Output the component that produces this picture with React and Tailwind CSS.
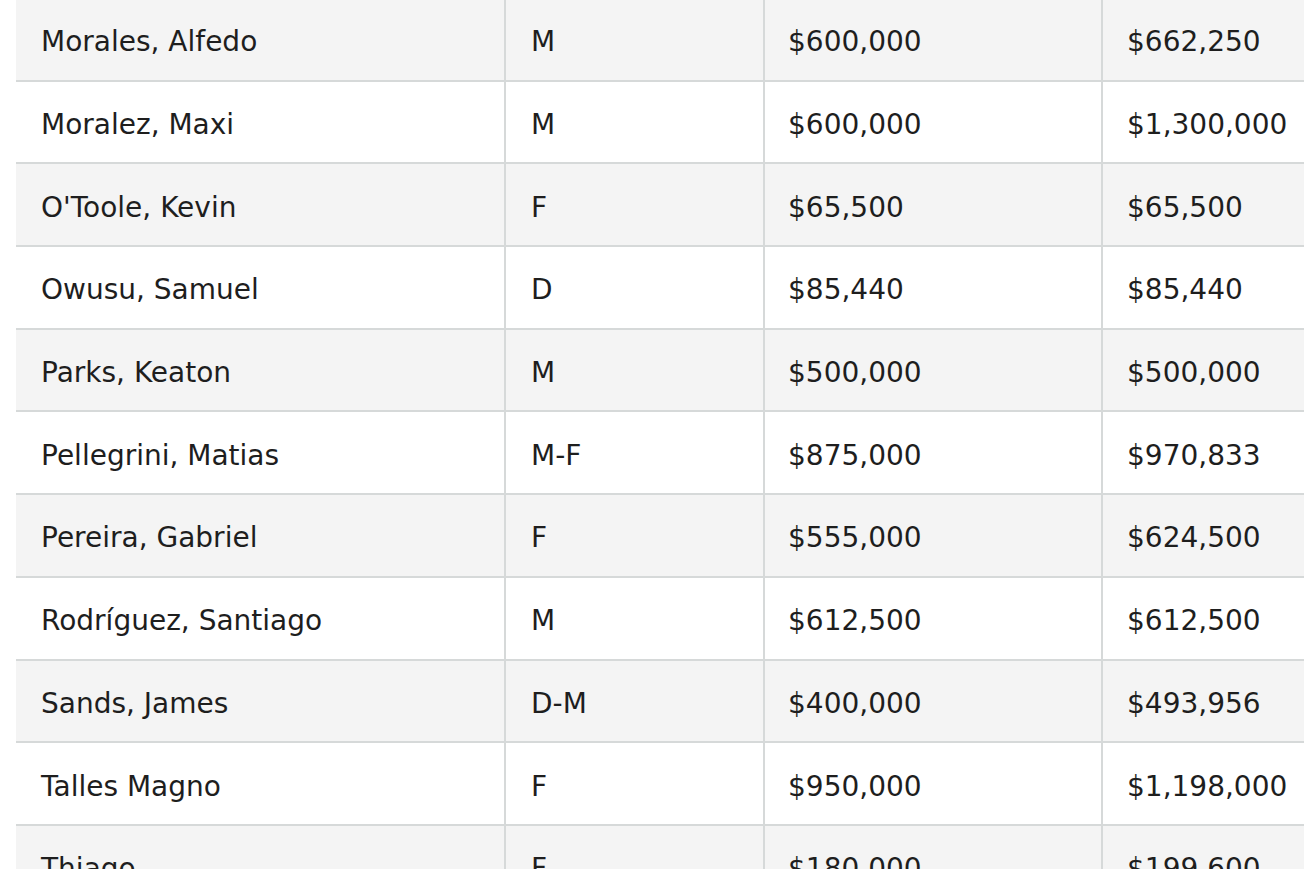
const filas = [
  ['Morales, Alfedo', 'M', '$600,000', '$662,250'],
  ['Moralez, Maxi', 'M', '$600,000', '$1,300,000'],
  ["O'Toole, Kevin", 'F', '$65,500', '$65,500'],
  ['Owusu, Samuel', 'D', '$85,440', '$85,440'],
  ['Parks, Keaton', 'M', '$500,000', '$500,000'],
  ['Pellegrini, Matias', 'M-F', '$875,000', '$970,833'],
  ['Pereira, Gabriel', 'F', '$555,000', '$624,500'],
  ['Rodríguez, Santiago', 'M', '$612,500', '$612,500'],
  ['Sands, James', 'D-M', '$400,000', '$493,956'],
  ['Talles Magno', 'F', '$950,000', '$1,198,000'],
  ['Thiago', 'F', '$180,000', '$199,600'],
]

export default function App() {
  return (
    <div className="h-[869px] overflow-hidden bg-white pl-4">
      <div
        className="-mt-[1px] w-[1320px] text-[28px] text-[#1e1e1e]"
        style={{ fontFamily: '"DejaVu Sans", sans-serif' }}
      >
        {filas.map((f, i) => (
          <div
            key={f[0]}
            className={`flex h-[82.7px] border-b-2 border-[#d6d9d9] ${i % 2 === 0 ? 'bg-[#f4f4f4]' : 'bg-white'}`}
          >
            <div className="flex w-[488px] items-center pl-[25px] pt-[6px]">{f[0]}</div>
            <div className="flex w-[259px] items-center border-l-2 border-[#d6d9d9] pl-[25px] pt-[6px]">{f[1]}</div>
            <div className="flex w-[338px] items-center border-l-2 border-[#d6d9d9] pl-[23px] pt-[6px]">{f[2]}</div>
            <div className="flex flex-1 items-center border-l-2 border-[#d6d9d9] pl-[24px] pt-[6px]">{f[3]}</div>
          </div>
        ))}
      </div>
    </div>
  )
}
